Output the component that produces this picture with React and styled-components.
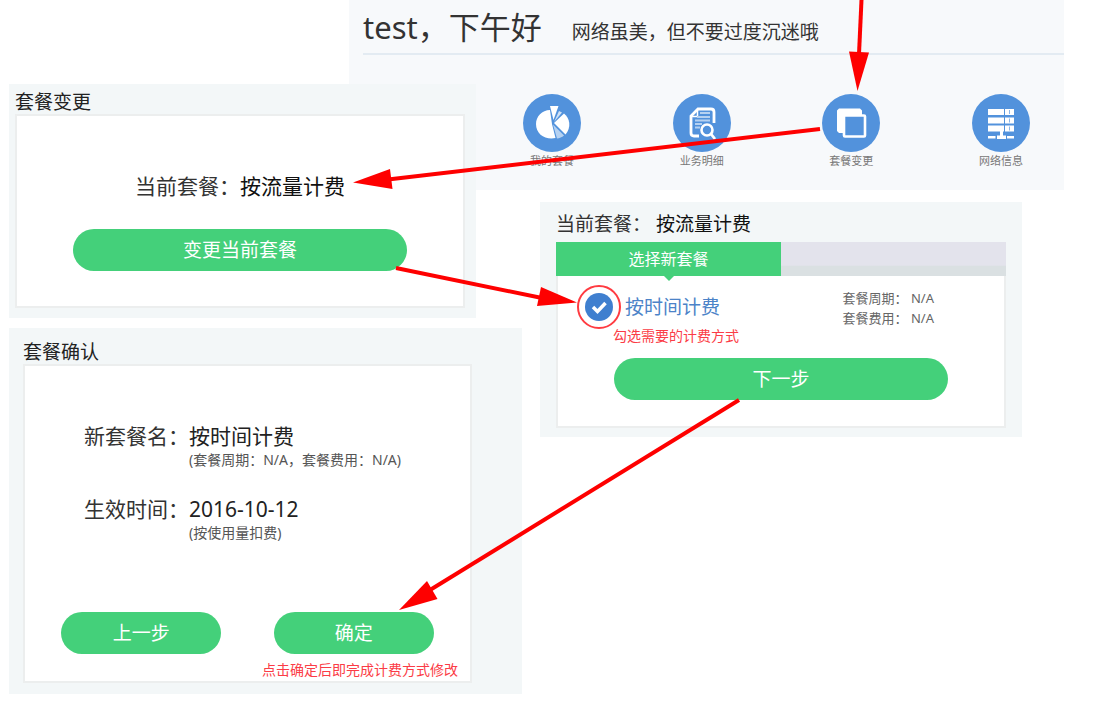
import styled, { createGlobalStyle } from "styled-components";

const GlobalStyle = createGlobalStyle`
  * {
    box-sizing: border-box;
  }
  body {
    margin: 0;
    background: #fff;
    color: #333;
    font-family: "Noto Sans", "Noto Sans CJK SC", sans-serif;
  }
  h1, h2, p, dl, dt, dd {
    margin: 0;
    font-weight: 400;
  }
  button, input {
    font-family: inherit;
    margin: 0;
  }
`;

const PieIcon = () => (
  <svg viewBox="0 0 58 58" aria-hidden="true">
    <path d="M27 16c-8 0-14 6.500-14 14 0 9 7 14.500 15.500 14.500l4-.4L29 30z" fill="#fff" />
    <path d="M27 12h8.500L30.500 26z" fill="#fff" />
    <path d="M36 17l3 1.500-8 9.500z" fill="#cfe1f6" />
    <path d="M41 19.500c6 4.500 7.500 14 1.500 21L31 29z" fill="#fff" />
    <path d="M30 30.500L41 41.500c-2 2-4.500 2.600-7 3z" fill="#b5d1f1" />
  </svg>
);

const DetailIcon = () => (
  <svg viewBox="0 0 58 58" aria-hidden="true" fill="none" stroke="#fff">
    <path d="M26 42h-5c-2 0-3-1-3-3V22l7-7h13c2 0 3 1 3 3v11" strokeWidth="2.800" />
    <path d="M18 22.500h6.500V15" strokeWidth="1.500" />
    <path d="M27 19h10M24 23h13M22 26.500h15M22 30h7M22 33.500h5" strokeWidth="1.800" stroke="#b5d1f1" />
    <circle cx="34" cy="36" r="5.500" strokeWidth="2.600" />
    <path d="M38 40l4 5" strokeWidth="2.800" />
  </svg>
);

const ChangeIcon = () => (
  <svg viewBox="0 0 58 58" aria-hidden="true">
    <path d="M17 14.500h21l2 2V22H23v17h-6l-2-2V16.500z" fill="#fff" />
    <rect x="22" y="21.500" width="21" height="21" rx="1" fill="#5292dc" stroke="#fff" strokeWidth="2.600" />
  </svg>
);

const ServerIcon = () => (
  <svg viewBox="0 0 58 58" aria-hidden="true" fill="#fff">
    <path d="M16 15h16v6H16zM16 23.500h16v6H16zM16 31.500h16v6H16z" />
    <path d="M33 15h9v6h-9zM33 23.500h9v6h-9zM33 31.500h9v6h-9z" />
    <path d="M37.500 16v4M37.500 24.500v4M37.500 32.500v4" stroke="#8ab6e9" />
    <path d="M28 37h3v4.500h3V45h-9v-3.500h3zM16 42h7.500v2.500H16zM35 42h7v2.500h-7z" />
  </svg>
);

const menu = [
  { name: "我的套餐", icon: <PieIcon /> },
  { name: "业务明细", icon: <DetailIcon /> },
  { name: "套餐变更", icon: <ChangeIcon /> },
  { name: "网络信息", icon: <ServerIcon /> },
];

const Arrow = ({ line, head }) => (
  <g>
    <path d={line} fill="none" stroke="#fe0000" strokeWidth="4" />
    <path d={head} fill="#fe0000" />
  </g>
);

const Annotations = () => (
  <Overlay viewBox="0 0 1105 711" preserveAspectRatio="none" aria-hidden="true">
    <Arrow line="M861.500 0L859 54" head="M849 51.500L869 52.500L857.500 91z" />
    <Arrow line="M820 129L388 179.500" head="M390 169L392.500 189L353 182.500z" />
    <Arrow line="M396 268L542 298" head="M541 287L537 306L577 302.500z" />
    <Arrow line="M739 400L430 590" head="M427 581L437.500 599L399 610z" />
    <circle cx="599" cy="307" r="21" fill="none" stroke="#ff3b41" strokeWidth="2" />
  </Overlay>
);

const App = () => {
  return (
    <>
      <GlobalStyle />
      <Board>
        <RightStack>
          <Header>
            <Greeting>
              <h1>test，下午好</h1>
              <p>网络虽美，但不要过度沉迷哦</p>
            </Greeting>
            <Menu>
              {menu.map(({ name, icon }) => (
                <MenuItem key={name} href="#">
                  <span className="disc">{icon}</span>
                  {name}
                </MenuItem>
              ))}
            </Menu>
          </Header>
          <ChoosePanel>
            <CurrentPlan>
              当前套餐： <strong>按流量计费</strong>
            </CurrentPlan>
            <Steps>
              <Step>选择新套餐</Step>
            </Steps>
            <ChooseBox>
              <PlanRow>
                <div>
                  <Option>
                    <span className="tick">
                      <input type="checkbox" defaultChecked />
                      <svg viewBox="0 0 28 28" aria-hidden="true">
                        <path d="M8 14l4.500 4.500L20.500 10" fill="none" stroke="#fff" strokeWidth="3.500" />
                      </svg>
                    </span>
                    按时间计费
                  </Option>
                  <Note>勾选需要的计费方式</Note>
                </div>
                <Meta>
                  <p>套餐周期： N/A</p>
                  <p>套餐费用： N/A</p>
                </Meta>
              </PlanRow>
              <Button $width="75%">下一步</Button>
            </ChooseBox>
          </ChoosePanel>
        </RightStack>

        <LeftStack>
          <ChangePanel>
            <PanelTitle>套餐变更</PanelTitle>
            <Box>
              <PlanText>
                当前套餐：<strong>按流量计费</strong>
              </PlanText>
              <Button $width="75%">变更当前套餐</Button>
            </Box>
          </ChangePanel>
          <ConfirmPanel>
            <PanelTitle>套餐确认</PanelTitle>
            <Box $bottom="1px">
              <Details>
                <dt>新套餐名：</dt>
                <dd>
                  按时间计费
                  <small>(套餐周期：N/A，套餐费用：N/A)</small>
                </dd>
                <dt>生效时间：</dt>
                <dd>
                  2016-10-12
                  <small>(按使用量扣费)</small>
                </dd>
              </Details>
              <Actions>
                <Button $width="43%">上一步</Button>
                <Button $width="43%">确定</Button>
              </Actions>
              <ConfirmNote>点击确定后即完成计费方式修改</ConfirmNote>
            </Box>
          </ConfirmPanel>
        </LeftStack>
        <Annotations />
      </Board>
    </>
  );
};

// the two stacks share the middle column, so the left one lies over the header
const Board = styled.main`
  position: relative;
  display: grid;
  grid-template-columns: 340fr 173fr 542fr;
  align-items: start;
  padding: 0 41px 17px 9px;
`;

const LeftStack = styled.div`
  grid-area: 1 / 1 / 2 / 3;
  display: grid;
  gap: 10px;
  padding-top: 84px;
`;

const RightStack = styled.div`
  grid-area: 1 / 2 / 2 / 4;
  display: grid;
  gap: 12px;
`;

const Overlay = styled.svg`
  position: absolute;
  inset: 0;
  width: 100%;
  height: 100%;
  pointer-events: none;
`;

const Header = styled.header`
  padding: 0 0 20px 14px;
  background: #f7f9fb;
`;

const Greeting = styled.div`
  display: flex;
  align-items: baseline;
  gap: 30px;
  height: 55px;
  border-bottom: 2px solid #e3ebf2;
  white-space: nowrap;

  h1 {
    font-size: 31px;
    line-height: 54px;
  }
  p {
    font-size: 19px;
  }
`;

const Menu = styled.nav`
  display: flex;
  justify-content: space-between;
  padding: 39px 34px 0 160px;
`;

const MenuItem = styled.a`
  width: 58px;
  color: #777;
  font-size: 11px;
  line-height: 18px;
  text-align: center;
  text-decoration: none;

  .disc {
    display: block;
    height: 58px;
    border-radius: 50%;
    background: #5292dc;
  }
  svg {
    display: block;
  }
`;

const Panel = styled.section`
  background: #f3f7f8;
`;

const ChangePanel = styled(Panel)`
  margin-right: 46px;
  padding: 6px 11px 10px 6px;
`;

const ConfirmPanel = styled(Panel)`
  padding: 12px 50px 11px 14px;
`;

const ChoosePanel = styled(Panel)`
  margin: 0 42px 0 191px;
  padding: 8px 16px 9px;
`;

const PanelTitle = styled.h2`
  color: #222;
  font-size: 19px;
  line-height: 24px;
`;

const Box = styled.div`
  padding: 56px 0 ${({ $bottom }) => $bottom || "35px"};
  border: 2px solid #eceeee;
  background: #fff;
`;

const PlanText = styled.p`
  margin-bottom: 29px;
  font-size: 21px;
  line-height: 28px;
  text-align: center;

  strong {
    color: #111;
    font-weight: 400;
  }
`;

const Button = styled.button`
  display: block;
  width: ${({ $width }) => $width};
  height: 42px;
  margin: 0 auto;
  padding: 0;
  border: 0;
  border-radius: 21px;
  background: #44d07a;
  color: #fff;
  font-size: 19px;
  line-height: 42px;
  cursor: pointer;
`;

const Details = styled.dl`
  display: grid;
  grid-template-columns: auto 1fr;
  row-gap: 25px;
  padding-left: 59px;
  font-size: 21px;
  line-height: 28px;
  white-space: nowrap;

  dd {
    color: #222;
  }
  small {
    display: block;
    color: #555;
    font-size: 14px;
    line-height: 20px;
  }
`;

const Actions = styled.div`
  display: flex;
  justify-content: space-between;
  margin: 69px 36px 6px;

  button {
    margin: 0;
  }
`;

const Note = styled.p`
  padding-left: 55px;
  color: #fb3c46;
  font-size: 14px;
  line-height: 20px;
`;

const ConfirmNote = styled(Note)`
  padding: 0 12px 0 0;
  text-align: right;
`;

const CurrentPlan = styled.h2`
  margin-bottom: 4px;
  font-size: 19px;
  line-height: 28px;

  strong {
    color: #111;
    font-weight: 400;
  }
`;

const Steps = styled.div`
  background: linear-gradient(#e3e3ec 68%, #dae0e2 72%);
`;

const Step = styled.div`
  position: relative;
  width: 50%;
  background: #44d07a;
  color: #fff;
  font-size: 16px;
  line-height: 34px;
  text-align: center;

  &::after {
    content: "";
    position: absolute;
    top: 100%;
    left: 50%;
    margin-left: -5px;
    border: 5px solid transparent;
    border-top-color: #44d07a;
    border-bottom: 0;
  }
`;

const ChooseBox = styled.div`
  padding: 12px 0 26px;
  border: 2px solid #eceeee;
  border-top: 0;
  background: #fff;
`;

const PlanRow = styled.div`
  display: flex;
  justify-content: space-between;
  padding: 0 70px 12px 0;
`;

const Option = styled.label`
  display: flex;
  align-items: center;
  gap: 12px;
  margin: 5px 0 5px 27px;
  color: #4c83c8;
  font-size: 19px;
  line-height: 28px;

  .tick {
    display: grid;
    width: 28px;
    height: 28px;
  }
  input,
  svg {
    grid-area: 1 / 1;
    width: 28px;
    height: 28px;
  }
  input {
    appearance: none;
    border-radius: 50%;
    background: #3f7fcf;
  }
  svg {
    z-index: 1;
    pointer-events: none;
  }
`;

const Meta = styled.div`
  color: #666;
  font-size: 13px;
  line-height: 20px;
`;

export default App;
